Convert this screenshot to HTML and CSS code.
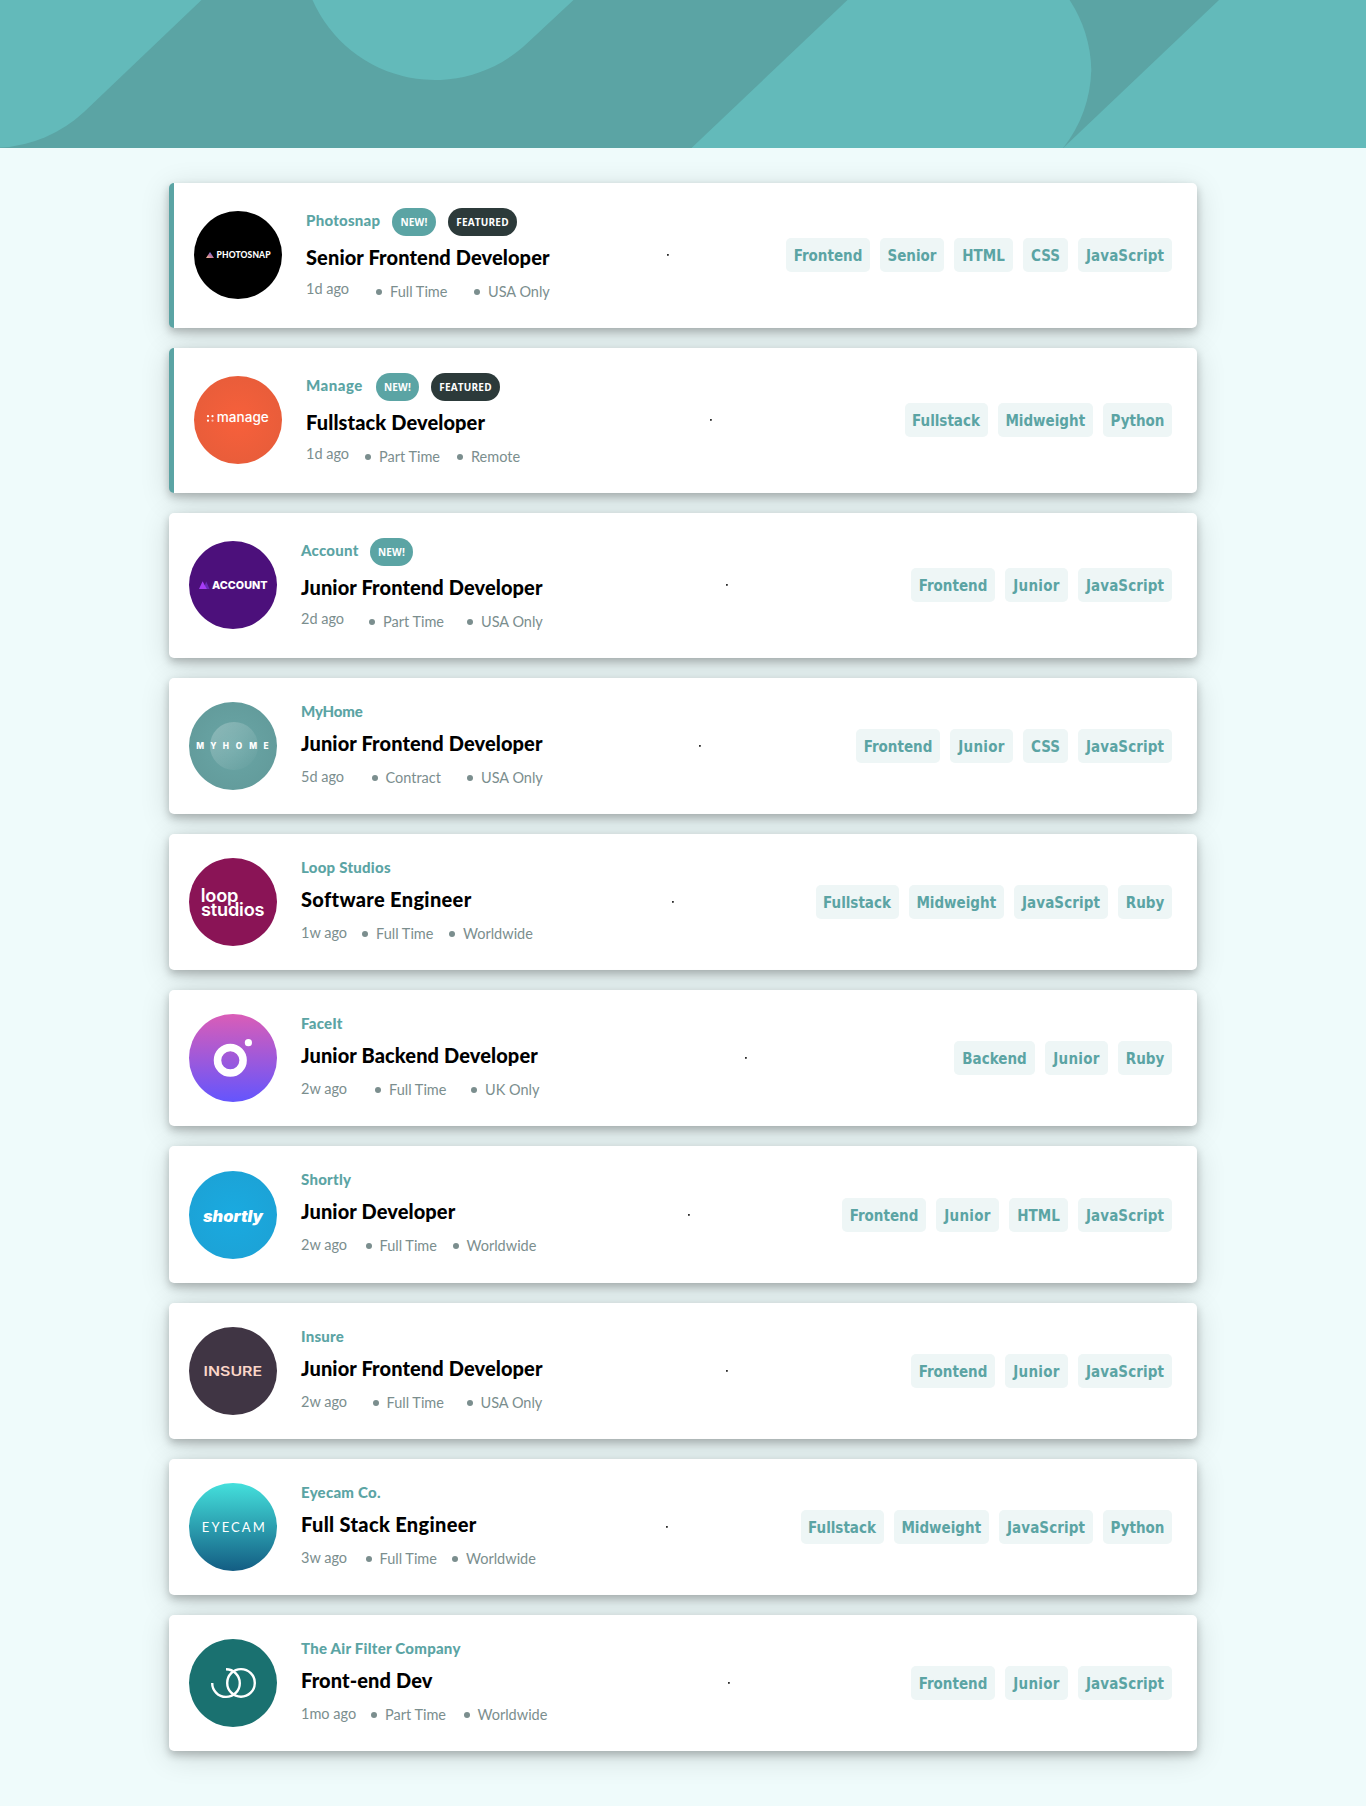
FILE: index.html
```html
<!DOCTYPE html>
<html lang="en">
<head>
<meta charset="utf-8">
<title>Job listings</title>
<link rel="stylesheet" href="styles.css">
</head>
<body>
<header class="banner">
  <svg class="banner-art" viewBox="0 0 1366 148" aria-hidden="true">
    <g fill="#63baba">
      <path d="M0 0H201.5L84 112A134 134 0 0 1 0 147.6Z"/>
      <path d="M312.5 0A133.8 133.8 0 0 0 527.4 43L573.5 0Z"/>
      <path d="M847.5 0H1069.6A134 134 0 0 1 1091.3 70A134 134 0 0 1 1063.2 148H691.5Z"/>
      <path d="M1219 0H1366V148H1063.2Z"/>
    </g>
  </svg>
</header>
<main class="jobs">
  <article class="job job-photosnap job-tall job-featured">
    <svg class="logo" viewBox="0 0 88 88">
      <defs><linearGradient id="snap" x1="0" y1="1" x2=".7" y2="0"><stop offset="0" stop-color="#ffc593"/><stop offset=".5" stop-color="#bc7198"/><stop offset="1" stop-color="#5a77ff"/></linearGradient></defs>
      <circle cx="44" cy="44" r="44" fill="#000"/>
      <path d="M12 47L16 41L20 47Z" fill="url(#snap)"/>
      <text x="22.5" y="47" class="lg-lato" font-size="8.5" textLength="54">PHOTOSNAP</text>
    </svg>
    <div class="info">
      <div class="head"><h2 class="company">Photosnap</h2><span class="badge badge-new">NEW!</span><span class="badge badge-featured">FEATURED</span></div>
      <h1 class="title">Senior Frontend Developer</h1>
      <ul class="meta"><li class="age">1d ago</li><li class="item">Full Time</li><li class="item">USA Only</li></ul>
    </div>
    <hr class="divider">
    <div class="tags"><span class="tag tag-frontend">Frontend</span><span class="tag tag-senior">Senior</span><span class="tag tag-html">HTML</span><span class="tag tag-css">CSS</span><span class="tag tag-javascript">JavaScript</span></div>
  </article>

  <article class="job job-manage job-tall job-featured">
    <svg class="logo" viewBox="0 0 88 88">
      <defs><radialGradient id="mng"><stop offset="0" stop-color="#f7603b"/><stop offset="1" stop-color="#e95d3a"/></radialGradient></defs>
      <circle cx="44" cy="44" r="44" fill="url(#mng)"/>
      <g fill="#fff"><circle cx="14" cy="40.2" r="1.1"/><circle cx="18.5" cy="40.2" r="1.1"/><circle cx="14" cy="44.7" r="1.1"/><circle cx="18.5" cy="44.7" r="1.1" opacity=".6"/></g>
      <text x="22.8" y="46.4" class="lg-inter" font-weight="500" font-size="13" textLength="52" lengthAdjust="spacingAndGlyphs">manage</text>
    </svg>
    <div class="info">
      <div class="head"><h2 class="company">Manage</h2><span class="badge badge-new">NEW!</span><span class="badge badge-featured">FEATURED</span></div>
      <h1 class="title">Fullstack Developer</h1>
      <ul class="meta"><li class="age">1d ago</li><li class="item">Part Time</li><li class="item">Remote</li></ul>
    </div>
    <hr class="divider">
    <div class="tags"><span class="tag tag-fullstack">Fullstack</span><span class="tag tag-midweight">Midweight</span><span class="tag tag-python">Python</span></div>
  </article>

  <article class="job job-account job-tall">
    <svg class="logo" viewBox="0 0 88 88">
      <circle cx="44" cy="44" r="44" fill="#4c107b"/>
      <path d="M14.5 48L17.2 40.5L20.5 48Z" fill="#6a2bb8"/>
      <path d="M10 48L13.6 40.3L17.8 48Z" fill="#a63cf5"/>
      <text x="23" y="48" class="lg-inter" font-weight="800" font-size="11" textLength="55.5" lengthAdjust="spacingAndGlyphs">ACCOUNT</text>
    </svg>
    <div class="info">
      <div class="head"><h2 class="company">Account</h2><span class="badge badge-new">NEW!</span></div>
      <h1 class="title">Junior Frontend Developer</h1>
      <ul class="meta"><li class="age">2d ago</li><li class="item">Part Time</li><li class="item">USA Only</li></ul>
    </div>
    <hr class="divider">
    <div class="tags"><span class="tag tag-frontend">Frontend</span><span class="tag tag-junior">Junior</span><span class="tag tag-javascript">JavaScript</span></div>
  </article>

  <article class="job job-myhome">
    <svg class="logo" viewBox="0 0 88 88">
      <defs>
        <radialGradient id="home"><stop offset="0" stop-color="#6aa6a6"/><stop offset="1" stop-color="#639c9c"/></radialGradient>
        <linearGradient id="homeIn" x1=".1" y1=".1" x2=".85" y2=".9"><stop offset="0" stop-color="#fff" stop-opacity=".23"/><stop offset="1" stop-color="#fff" stop-opacity=".02"/></linearGradient>
      </defs>
      <circle cx="44" cy="44" r="44" fill="url(#home)"/>
      <circle cx="45" cy="44" r="24" fill="url(#homeIn)"/>
      <text y="47" x="7.2 21.2 33.8 46.8 60.2 74.6" class="lg-inter" font-weight="800" font-size="8.3">MYHOME</text>
    </svg>
    <div class="info">
      <div class="head"><h2 class="company">MyHome</h2></div>
      <h1 class="title">Junior Frontend Developer</h1>
      <ul class="meta"><li class="age">5d ago</li><li class="item">Contract</li><li class="item">USA Only</li></ul>
    </div>
    <hr class="divider">
    <div class="tags"><span class="tag tag-frontend">Frontend</span><span class="tag tag-junior">Junior</span><span class="tag tag-css">CSS</span><span class="tag tag-javascript">JavaScript</span></div>
  </article>

  <article class="job job-loop">
    <svg class="logo" viewBox="0 0 88 88">
      <circle cx="44" cy="44" r="44" fill="#8a1456"/>
      <text class="lg-inter lg-loop" font-weight="600" font-size="18.2"><tspan x="11.8" y="44">loop</tspan><tspan x="12" y="57.7">studios</tspan></text>
    </svg>
    <div class="info">
      <div class="head"><h2 class="company">Loop Studios</h2></div>
      <h1 class="title">Software Engineer</h1>
      <ul class="meta"><li class="age">1w ago</li><li class="item">Full Time</li><li class="item">Worldwide</li></ul>
    </div>
    <hr class="divider">
    <div class="tags"><span class="tag tag-fullstack">Fullstack</span><span class="tag tag-midweight">Midweight</span><span class="tag tag-javascript">JavaScript</span><span class="tag tag-ruby">Ruby</span></div>
  </article>

  <article class="job job-faceit">
    <svg class="logo" viewBox="0 0 88 88">
      <defs><linearGradient id="face" x1="0" y1="0" x2="0" y2="1"><stop offset="0" stop-color="#da5db7"/><stop offset="1" stop-color="#6455fd"/></linearGradient></defs>
      <circle cx="44" cy="44" r="44" fill="url(#face)"/>
      <circle cx="41.3" cy="46.3" r="12.8" fill="none" stroke="#fff" stroke-width="7.5"/>
      <circle cx="59.4" cy="28.7" r="3.6" fill="#fff"/>
    </svg>
    <div class="info">
      <div class="head"><h2 class="company">FaceIt</h2></div>
      <h1 class="title">Junior Backend Developer</h1>
      <ul class="meta"><li class="age">2w ago</li><li class="item">Full Time</li><li class="item">UK Only</li></ul>
    </div>
    <hr class="divider">
    <div class="tags"><span class="tag tag-backend">Backend</span><span class="tag tag-junior">Junior</span><span class="tag tag-ruby">Ruby</span></div>
  </article>

  <article class="job job-shortly">
    <svg class="logo" viewBox="0 0 88 88">
      <defs><radialGradient id="short"><stop offset="0" stop-color="#1aaae0"/><stop offset="1" stop-color="#1ca3d7"/></radialGradient></defs>
      <circle cx="44" cy="44" r="44" fill="url(#short)"/>
      <text x="14" y="50.6" class="lg-inter" font-weight="900" font-style="italic" font-size="15.6" textLength="60" lengthAdjust="spacingAndGlyphs">shortly</text>
    </svg>
    <div class="info">
      <div class="head"><h2 class="company">Shortly</h2></div>
      <h1 class="title">Junior Developer</h1>
      <ul class="meta"><li class="age">2w ago</li><li class="item">Full Time</li><li class="item">Worldwide</li></ul>
    </div>
    <hr class="divider">
    <div class="tags"><span class="tag tag-frontend">Frontend</span><span class="tag tag-junior">Junior</span><span class="tag tag-html">HTML</span><span class="tag tag-javascript">JavaScript</span></div>
  </article>

  <article class="job job-insure">
    <svg class="logo" viewBox="0 0 88 88">
      <circle cx="44" cy="44" r="44" fill="#403544"/>
      <text x="14.6" y="48.9" class="lg-inter lg-insure" font-weight="600" font-size="12.6" textLength="58.5" lengthAdjust="spacingAndGlyphs">INSURE</text>
    </svg>
    <div class="info">
      <div class="head"><h2 class="company">Insure</h2></div>
      <h1 class="title">Junior Frontend Developer</h1>
      <ul class="meta"><li class="age">2w ago</li><li class="item">Full Time</li><li class="item">USA Only</li></ul>
    </div>
    <hr class="divider">
    <div class="tags"><span class="tag tag-frontend">Frontend</span><span class="tag tag-junior">Junior</span><span class="tag tag-javascript">JavaScript</span></div>
  </article>

  <article class="job job-eyecam">
    <svg class="logo" viewBox="0 0 88 88">
      <defs><linearGradient id="eye" x1="0" y1="0" x2="0" y2="1"><stop offset="0" stop-color="#44e0dc"/><stop offset="1" stop-color="#135d83"/></linearGradient></defs>
      <circle cx="44" cy="44" r="44" fill="url(#eye)"/>
      <text x="12.8" y="48.7" class="lg-lato lg-thin" font-size="13" textLength="63">EYECAM</text>
    </svg>
    <div class="info">
      <div class="head"><h2 class="company">Eyecam Co.</h2></div>
      <h1 class="title">Full Stack Engineer</h1>
      <ul class="meta"><li class="age">3w ago</li><li class="item">Full Time</li><li class="item">Worldwide</li></ul>
    </div>
    <hr class="divider">
    <div class="tags"><span class="tag tag-fullstack">Fullstack</span><span class="tag tag-midweight">Midweight</span><span class="tag tag-javascript">JavaScript</span><span class="tag tag-python">Python</span></div>
  </article>

  <article class="job job-air">
    <svg class="logo" viewBox="0 0 88 88">
      <circle cx="44" cy="44" r="44" fill="#1a7170"/>
      <g fill="none" stroke="#fff" stroke-width="2.4"><circle cx="52" cy="43.9" r="13.8"/><path d="M23.2 44A13.8 13.8 0 1 0 37 30.3"/></g>
    </svg>
    <div class="info">
      <div class="head"><h2 class="company">The Air Filter Company</h2></div>
      <h1 class="title">Front-end Dev</h1>
      <ul class="meta"><li class="age">1mo ago</li><li class="item">Part Time</li><li class="item">Worldwide</li></ul>
    </div>
    <hr class="divider">
    <div class="tags"><span class="tag tag-frontend">Frontend</span><span class="tag tag-junior">Junior</span><span class="tag tag-javascript">JavaScript</span></div>
  </article>
</main>
</body>
</html>
```
FILE: styles.css
```css
* { box-sizing: border-box; margin: 0; padding: 0; }

body {
  background: #effbfb;
  font-family: Lato, "Noto Sans", sans-serif;
  min-height: 1806px;
}

.banner { height: 148px; background: #5ba4a4; }
.banner-art { display: block; width: 100%; height: 148px; }

.jobs {
  width: 1028px;
  margin: 35px auto 0;
  display: flex;
  flex-direction: column;
  gap: 20px;
}

.job {
  height: 136px;
  display: flex;
  align-items: center;
  padding: 0 25px 0 20px;
  background: #fff;
  border-radius: 5px;
  box-shadow: 0 4px 8px rgba(0, 0, 0, .24), 0 6px 30px rgba(0, 0, 0, .14);
}
.job-tall { height: 145px; padding-bottom: 1px; }
.job-featured { border-left: 5px solid #5ba4a4; }

.logo { width: 88px; height: 88px; flex: none; margin-right: 24px; }
.logo text { fill: #fff; }
.lg-lato { font-family: Lato, sans-serif; font-weight: 900; }
.lg-inter { font-family: Inter, sans-serif; }
.lg-thin { font-weight: 400; }
.lg-loop { letter-spacing: -.2px; }
.logo .lg-insure { fill: #fbd6c8; }

.info {
  flex: none;
  align-self: stretch;
  width: 242px;
  padding-top: 24px;
}
.job-tall .info { padding-top: 25px; }

.head { display: flex; gap: 12px; height: 20px; white-space: nowrap; }
.job-tall .head { height: 28px; }
.company {
  color: #5ba4a4;
  font-size: 15px;
  font-weight: 900;
  line-height: 18px;
  letter-spacing: .25px;
}
.job-tall .company { padding-top: 3px; }

.badge {
  height: 28px;
  border-radius: 14px;
  color: #fff;
  font: bold 10px/28px "Open Sans", sans-serif;
  letter-spacing: .2px;
  text-align: center;
}
.badge-new { width: 43px; background: #5ba4a4; }
.badge-featured { width: 69px; background: #2c3a3a; }

.title {
  margin-top: 9px;
  font-size: 20px;
  font-weight: 900;
  line-height: 24px;
  letter-spacing: .11px;
  white-space: nowrap;
}

.meta {
  display: grid;
  margin-top: 13px;
  list-style: none;
  color: #7b8e8e;
  font-size: 14.5px;
  line-height: 18px;
  white-space: nowrap;
}
.job-tall .meta { margin-top: 11px; }
.item { display: flex; align-items: center; gap: 8px; padding-top: 1.4px; }
.job-tall .item { padding-top: 3px; }
.item::before { content: ""; width: 6px; height: 6px; border-radius: 50%; background: #7b8e8e; }

.job-photosnap .company { width: 74px; }
.job-manage .company { width: 58px; letter-spacing: .5px; }
.job-account .company { width: 57px; }
.job-myhome .company { letter-spacing: -.2px; }

.job-photosnap .info { width: 244px; }
.job-manage .info { width: 212px; }
.job-loop .info { width: 230px; }
.job-faceit .info { width: 237px; }
.job-shortly .info { width: 234px; }
.job-eyecam .info { width: 233px; }
.job-air .info { width: 245px; }
.job-loop .title, .job-eyecam .title { letter-spacing: .33px; }

.job-photosnap .meta { grid-template-columns: 70px 98px auto; }
.job-manage .meta { grid-template-columns: 59px 92px auto; }
.job-account .meta { grid-template-columns: 68px 98px auto; }
.job-myhome .meta { grid-template-columns: 70.5px 95.5px auto; }
.job-loop .meta { grid-template-columns: 61px 87px auto; }
.job-faceit .meta { grid-template-columns: 74px 96px auto; }
.job-shortly .meta { grid-template-columns: 64.5px 87px auto; }
.job-insure .meta { grid-template-columns: 71.5px 94px auto; }
.job-eyecam .meta { grid-template-columns: 64.5px 86.5px auto; }
.job-air .meta { grid-template-columns: 70px 92.5px auto; }

.job-photosnap .badge-new { width: 44px; }
.job-shortly { height: 137px; }

.divider { width: 2px; height: 2px; margin: 0 auto; border: 1px inset #808080; }

.tags { display: flex; gap: 10px; }
.tag {
  height: 34px;
  border-radius: 5px;
  background: #eef6f6;
  color: #5ba4a4;
  font: bold 15px/36px "DejaVu Sans Condensed", "DejaVu Sans", sans-serif;
  text-align: center;
}
.tag-frontend { width: 84px; }
.tag-senior { width: 64px; }
.tag-html { width: 59px; }
.tag-css { width: 45px; }
.tag-javascript { width: 94px; letter-spacing: .1px; }
.tag-fullstack { width: 83px; }
.tag-midweight { width: 95.5px; }
.tag-python { width: 69px; }
.tag-junior { width: 63px; letter-spacing: .3px; }
.tag-ruby { width: 54px; }
.tag-backend { width: 81px; }
```
